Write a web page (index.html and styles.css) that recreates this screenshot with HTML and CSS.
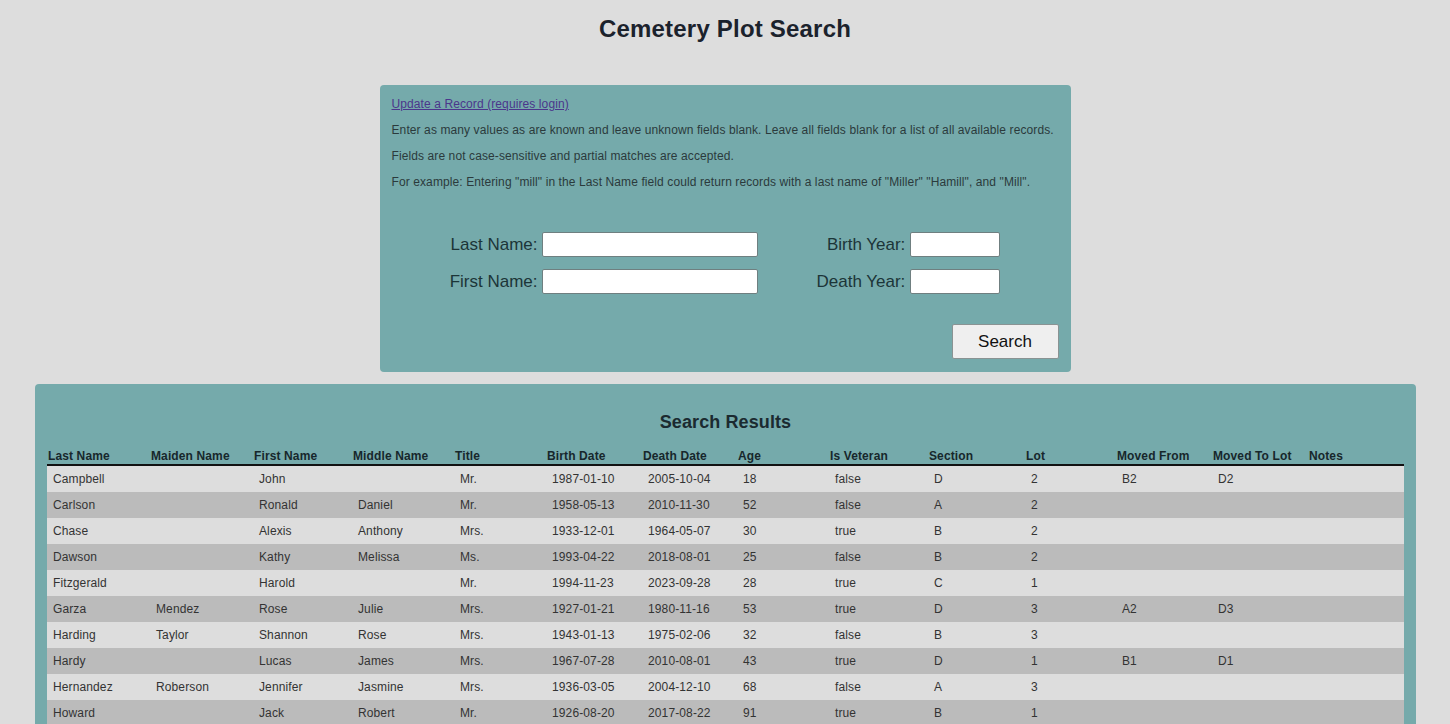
FILE: index.html
```html
<!DOCTYPE html>
<html lang="en">
<head>
<meta charset="utf-8">
<title>Cemetery Plot Search</title>
<link rel="stylesheet" href="styles.css">
</head>
<body>
<h1 class="page-title">Cemetery Plot Search</h1>

<section class="search-panel">
  <p class="info"><a class="update-link" href="#">Update a Record (requires login)</a></p>
  <p class="info">Enter as many values as are known and leave unknown fields blank. Leave all fields blank for a list of all available records.</p>
  <p class="info">Fields are not case-sensitive and partial matches are accepted.</p>
  <p class="info">For example: Entering "mill" in the Last Name field could return records with a last name of "Miller" "Hamill", and "Mill".</p>

  <form class="search-form">
    <div class="fields">
      <label class="field-label" for="last">Last Name:</label>
      <input class="field-input" id="last" type="text">
      <label class="field-label right" for="birth">Birth Year:</label>
      <input class="field-input" id="birth" type="text">
      <label class="field-label" for="first">First Name:</label>
      <input class="field-input" id="first" type="text">
      <label class="field-label right" for="death">Death Year:</label>
      <input class="field-input" id="death" type="text">
    </div>
    <div class="actions">
      <button class="search-btn" type="button">Search</button>
    </div>
  </form>
</section>

<section class="results-panel">
  <h2 class="results-title">Search Results</h2>
  <table class="results">
    <colgroup>
      <col class="c1"><col class="c2"><col class="c3"><col class="c4"><col class="c5"><col class="c6"><col class="c7">
      <col class="c8"><col class="c9"><col class="c10"><col class="c11"><col class="c12"><col class="c13"><col class="c14">
    </colgroup>
    <thead>
      <tr>
        <th>Last Name</th><th>Maiden Name</th><th>First Name</th><th>Middle Name</th><th>Title</th><th>Birth Date</th><th>Death Date</th>
        <th>Age</th><th>Is Veteran</th><th>Section</th><th>Lot</th><th>Moved From</th><th>Moved To Lot</th><th>Notes</th>
      </tr>
    </thead>
    <tbody>
      <tr><td>Campbell</td><td></td><td>John</td><td></td><td>Mr.</td><td>1987-01-10</td><td>2005-10-04</td><td>18</td><td>false</td><td>D</td><td>2</td><td>B2</td><td>D2</td><td></td></tr>
      <tr><td>Carlson</td><td></td><td>Ronald</td><td>Daniel</td><td>Mr.</td><td>1958-05-13</td><td>2010-11-30</td><td>52</td><td>false</td><td>A</td><td>2</td><td></td><td></td><td></td></tr>
      <tr><td>Chase</td><td></td><td>Alexis</td><td>Anthony</td><td>Mrs.</td><td>1933-12-01</td><td>1964-05-07</td><td>30</td><td>true</td><td>B</td><td>2</td><td></td><td></td><td></td></tr>
      <tr><td>Dawson</td><td></td><td>Kathy</td><td>Melissa</td><td>Ms.</td><td>1993-04-22</td><td>2018-08-01</td><td>25</td><td>false</td><td>B</td><td>2</td><td></td><td></td><td></td></tr>
      <tr><td>Fitzgerald</td><td></td><td>Harold</td><td></td><td>Mr.</td><td>1994-11-23</td><td>2023-09-28</td><td>28</td><td>true</td><td>C</td><td>1</td><td></td><td></td><td></td></tr>
      <tr><td>Garza</td><td>Mendez</td><td>Rose</td><td>Julie</td><td>Mrs.</td><td>1927-01-21</td><td>1980-11-16</td><td>53</td><td>true</td><td>D</td><td>3</td><td>A2</td><td>D3</td><td></td></tr>
      <tr><td>Harding</td><td>Taylor</td><td>Shannon</td><td>Rose</td><td>Mrs.</td><td>1943-01-13</td><td>1975-02-06</td><td>32</td><td>false</td><td>B</td><td>3</td><td></td><td></td><td></td></tr>
      <tr><td>Hardy</td><td></td><td>Lucas</td><td>James</td><td>Mrs.</td><td>1967-07-28</td><td>2010-08-01</td><td>43</td><td>true</td><td>D</td><td>1</td><td>B1</td><td>D1</td><td></td></tr>
      <tr><td>Hernandez</td><td>Roberson</td><td>Jennifer</td><td>Jasmine</td><td>Mrs.</td><td>1936-03-05</td><td>2004-12-10</td><td>68</td><td>false</td><td>A</td><td>3</td><td></td><td></td><td></td></tr>
      <tr><td>Howard</td><td></td><td>Jack</td><td>Robert</td><td>Mr.</td><td>1926-08-20</td><td>2017-08-22</td><td>91</td><td>true</td><td>B</td><td>1</td><td></td><td></td><td></td></tr>
    </tbody>
  </table>
</section>
</body>
</html>
```

FILE: styles.css
```css
html, body {
  margin: 0;
  padding: 0;
  background: #dddddd;
  font-family: "Liberation Sans", Arial, sans-serif;
}

.page-title {
  margin: 15px 0 42px;
  font-size: 24px;
  line-height: 28px;
  font-weight: bold;
  text-align: center;
  color: #1b222c;
  letter-spacing: 0.2px;
}

.search-panel {
  box-sizing: border-box;
  width: 691px;
  margin: 0 auto;
  padding: 12px 12px 13px;
  background: #75aaab;
  border-radius: 4px;
}

.info {
  margin: 12px 0;
  font-size: 12px;
  line-height: 14px;
  color: #2b3a3c;
  letter-spacing: 0.1px;
  white-space: nowrap;
}

.info:first-child {
  margin-top: 0;
}

.update-link {
  color: #4b368c;
  text-decoration: underline;
}

.search-form {
  margin-top: 43px;
}

.fields {
  display: grid;
  grid-template-columns: auto 216px auto 90px;
  grid-auto-rows: 25px;
  column-gap: 5px;
  row-gap: 12px;
  justify-content: center;
  align-items: center;
}

.field-label {
  font-size: 17px;
  text-align: right;
  color: #1c3538;
  white-space: nowrap;
}

.field-label.right {
  padding-left: 53px;
}

.field-input {
  box-sizing: border-box;
  height: 25px;
  width: 100%;
  margin: 0;
  border: 1px solid #6f7f80;
  border-radius: 2px;
  background: #ffffff;
  padding: 0 3px;
  font-size: 14px;
  font-family: inherit;
}

.actions {
  display: flex;
  justify-content: flex-end;
  margin-top: 30px;
}

.search-btn {
  box-sizing: border-box;
  width: 107px;
  height: 35px;
  margin: 0;
  padding: 0;
  background: #efefef;
  border: 1px solid #8a9393;
  border-radius: 2px;
  font-family: inherit;
  font-size: 17px;
  color: #111;
}

.results-panel {
  box-sizing: border-box;
  width: 1381px;
  margin: 12px 0 0 35px;
  padding: 12px;
  background: #75aaab;
  border-radius: 4px;
}

.results-title {
  margin: 16px 0 15px;
  font-size: 18px;
  line-height: 21px;
  text-align: center;
  color: #1b2a30;
  letter-spacing: 0.1px;
}

.results {
  width: 100%;
  table-layout: fixed;
  border-collapse: separate;
  border-spacing: 0;
  font-size: 12px;
  letter-spacing: 0.12px;
}

.c1 { width: 103px; }
.c2 { width: 103px; }
.c3 { width: 99px; }
.c4 { width: 102px; }
.c5 { width: 92px; }
.c6 { width: 96px; }
.c7 { width: 95px; }
.c8 { width: 92px; }
.c9 { width: 99px; }
.c10 { width: 97px; }
.c11 { width: 91px; }
.c12 { width: 96px; }
.c13 { width: 96px; }
.c14 { width: 96px; }

.results th {
  padding: 1px;
  line-height: 14px;
  text-align: left;
  font-weight: bold;
  color: #17272c;
  border-bottom: 2px solid #111;
  white-space: nowrap;
}

.results td {
  height: 26px;
  box-sizing: border-box;
  padding: 0 6px;
  line-height: 14px;
  color: #333;
  white-space: nowrap;
}

.results tbody tr:nth-child(odd) {
  background: #dddddd;
}

.results tbody tr:nth-child(even) {
  background: #bbbbbb;
}
```
